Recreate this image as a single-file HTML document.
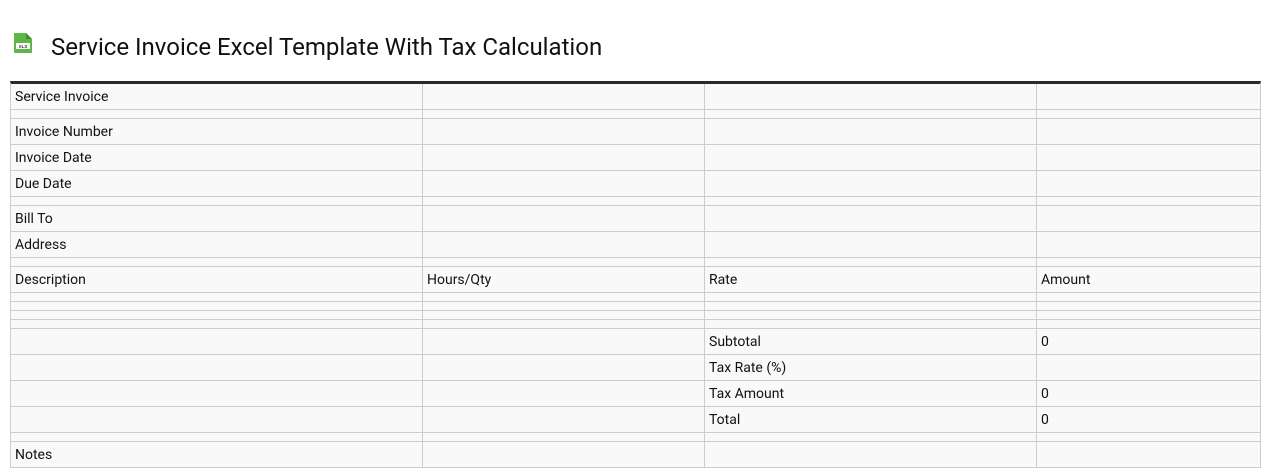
<!DOCTYPE html>
<html><head><meta charset="utf-8"><style>
body{margin:0;background:#fff;font-family:"Roboto","Liberation Sans",sans-serif;color:#111;}
.t{position:absolute;left:51px;top:32px;font-size:24px;line-height:30px;color:#111}
.tbl{position:absolute;left:10px;top:81px;width:1251px;border-top:3px solid #2a2a2a;background:#f9f9f9;border-left:1px solid #ccc;border-right:1px solid #ccc;box-sizing:border-box}
.r{display:flex;border-bottom:1px solid #ccc;height:25px}
.e{height:8px}
.c{box-sizing:border-box;border-right:1px solid #ccc;font-size:14px;line-height:24px;padding-top:1px;padding-left:4px;white-space:nowrap;overflow:hidden}
.e .c{padding-top:0}
.c:nth-child(1){width:412px}.c:nth-child(2){width:282px}.c:nth-child(3){width:332px}.c:nth-child(4){flex:1;border-right:none}
</style></head><body>
<svg style="position:absolute;left:13px;top:32px" width="20" height="22" viewBox="0 0 20 22">
<path d="M1 2 Q1 1 2 1 H13 L19 7 V20 Q19 21 18 21 H2 Q1 21 1 20 Z" fill="#5cb746"/>
<path d="M13 1 V7 H19" fill="#3e8e2f"/>
<rect x="3" y="11" width="14" height="6" fill="#fff"/>
<text x="10" y="15.8" font-size="4.5" font-family="Liberation Sans" font-weight="bold" text-anchor="middle" fill="#333">XLS</text>
</svg>
<div class="t">Service Invoice Excel Template With Tax Calculation</div>
<div class="tbl">
<div class="r"><div class="c">Service Invoice</div><div class="c"></div><div class="c"></div><div class="c"></div></div>
<div class="r e"><div class="c"></div><div class="c"></div><div class="c"></div><div class="c"></div></div>
<div class="r"><div class="c">Invoice Number</div><div class="c"></div><div class="c"></div><div class="c"></div></div>
<div class="r"><div class="c">Invoice Date</div><div class="c"></div><div class="c"></div><div class="c"></div></div>
<div class="r"><div class="c">Due Date</div><div class="c"></div><div class="c"></div><div class="c"></div></div>
<div class="r e"><div class="c"></div><div class="c"></div><div class="c"></div><div class="c"></div></div>
<div class="r"><div class="c">Bill To</div><div class="c"></div><div class="c"></div><div class="c"></div></div>
<div class="r"><div class="c">Address</div><div class="c"></div><div class="c"></div><div class="c"></div></div>
<div class="r e"><div class="c"></div><div class="c"></div><div class="c"></div><div class="c"></div></div>
<div class="r"><div class="c">Description</div><div class="c">Hours/Qty</div><div class="c">Rate</div><div class="c">Amount</div></div>
<div class="r e"><div class="c"></div><div class="c"></div><div class="c"></div><div class="c"></div></div>
<div class="r e"><div class="c"></div><div class="c"></div><div class="c"></div><div class="c"></div></div>
<div class="r e"><div class="c"></div><div class="c"></div><div class="c"></div><div class="c"></div></div>
<div class="r e"><div class="c"></div><div class="c"></div><div class="c"></div><div class="c"></div></div>
<div class="r"><div class="c"></div><div class="c"></div><div class="c">Subtotal</div><div class="c">0</div></div>
<div class="r"><div class="c"></div><div class="c"></div><div class="c">Tax Rate (%)</div><div class="c"></div></div>
<div class="r"><div class="c"></div><div class="c"></div><div class="c">Tax Amount</div><div class="c">0</div></div>
<div class="r"><div class="c"></div><div class="c"></div><div class="c">Total</div><div class="c">0</div></div>
<div class="r e"><div class="c"></div><div class="c"></div><div class="c"></div><div class="c"></div></div>
<div class="r"><div class="c">Notes</div><div class="c"></div><div class="c"></div><div class="c"></div></div>
</div>
</body></html>
